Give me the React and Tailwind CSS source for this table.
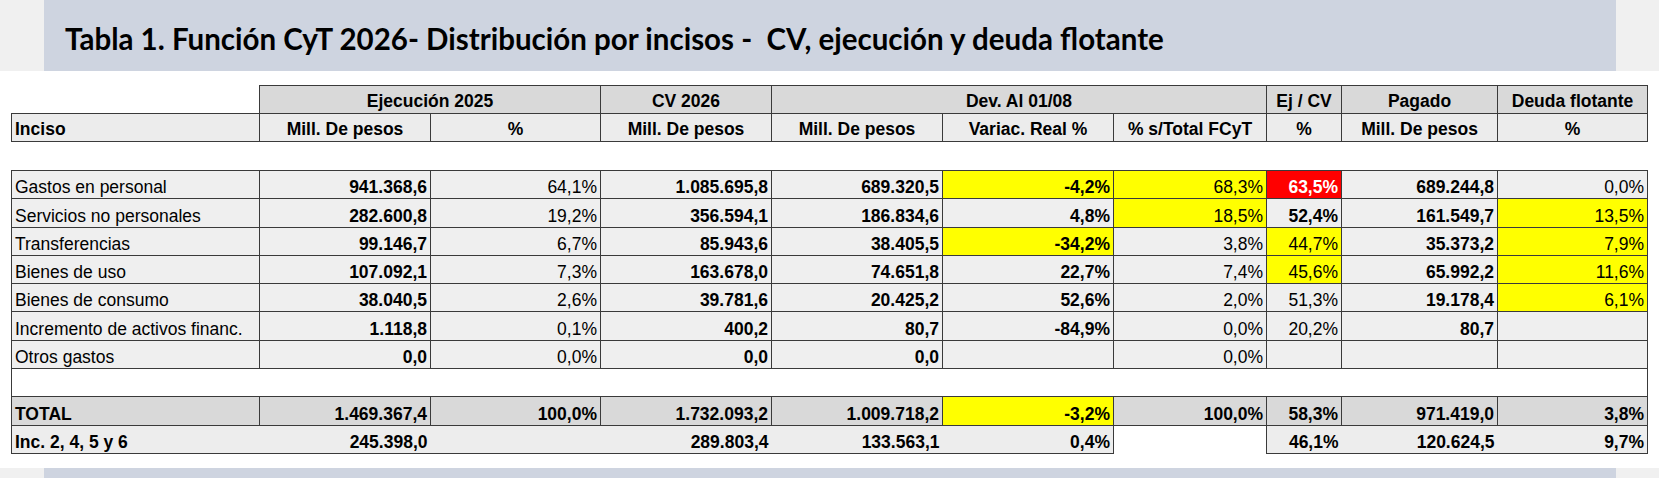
const ROWS = [
  ["Gastos en personal", ["941.368,6", 1], ["64,1%", 0], ["1.085.695,8", 1], ["689.320,5", 1], ["-4,2%", 1, "y"], ["68,3%", 0, "y"], ["63,5%", 1, "r"], ["689.244,8", 1], ["0,0%", 0]],
  ["Servicios no personales", ["282.600,8", 1], ["19,2%", 0], ["356.594,1", 1], ["186.834,6", 1], ["4,8%", 1], ["18,5%", 0, "y"], ["52,4%", 1], ["161.549,7", 1], ["13,5%", 0, "y"]],
  ["Transferencias", ["99.146,7", 1], ["6,7%", 0], ["85.943,6", 1], ["38.405,5", 1], ["-34,2%", 1, "y"], ["3,8%", 0], ["44,7%", 0, "y"], ["35.373,2", 1], ["7,9%", 0, "y"]],
  ["Bienes de uso", ["107.092,1", 1], ["7,3%", 0], ["163.678,0", 1], ["74.651,8", 1], ["22,7%", 1], ["7,4%", 0], ["45,6%", 0, "y"], ["65.992,2", 1], ["11,6%", 0, "y"]],
  ["Bienes de consumo", ["38.040,5", 1], ["2,6%", 0], ["39.781,6", 1], ["20.425,2", 1], ["52,6%", 1], ["2,0%", 0], ["51,3%", 0], ["19.178,4", 1], ["6,1%", 0, "y"]],
  ["Incremento de activos financ.", ["1.118,8", 1], ["0,1%", 0], ["400,2", 1], ["80,7", 1], ["-84,9%", 1], ["0,0%", 0], ["20,2%", 0], ["80,7", 1], ["", 0]],
  ["Otros gastos", ["0,0", 1], ["0,0%", 0], ["0,0", 1], ["0,0", 1], ["", 1], ["0,0%", 0], ["", 0], ["", 1], ["", 0]],
];

const TOTAL = [["1.469.367,4", 1], ["100,0%", 1], ["1.732.093,2", 1], ["1.009.718,2", 1], ["-3,2%", 1, "y"], ["100,0%", 1], ["58,3%", 1], ["971.419,0", 1], ["3,8%", 1]];

const WIDTHS = ["w-[248px]", "w-[171px]", "w-[170px]", "w-[171px]", "w-[171px]", "w-[171px]", "w-[153px]", "w-[75px]", "w-[156px]", "w-[150px]"];

function bgOf(kind, base) {
  if (kind === "y") return "bg-[#ffff00]";
  if (kind === "r") return "bg-[#ff0000] text-white";
  return base;
}

function Cell({ v, b, kind, base = "bg-[#efefef]" }) {
  return (
    <td
      className={`border border-[#3a3a3a] ${bgOf(kind, base)} ${b ? "font-bold" : "font-normal"} text-right pr-[3px] align-bottom pb-[1px] whitespace-nowrap`}
    >
      {v}
    </td>
  );
}

function Label({ children, b, base = "bg-[#efefef]" }) {
  return (
    <td className={`border border-[#3a3a3a] ${base} ${b ? "font-bold" : "font-normal"} text-left pl-[3px] align-bottom pb-[1px] whitespace-nowrap`}>
      {children}
    </td>
  );
}

function H1({ children, span = 1 }) {
  return (
    <th colSpan={span} className="border border-[#3a3a3a] bg-[#d9d9d9] font-bold text-center align-bottom pb-[2px] whitespace-nowrap">
      {children}
    </th>
  );
}

function H2({ children, left }) {
  return (
    <th className={`border border-[#3a3a3a] bg-[#ececec] font-bold ${left ? "text-left pl-[3px]" : "text-center"} align-bottom pb-[2px] whitespace-nowrap`}>
      {children}
    </th>
  );
}

export default function App() {
  return (
    <div className="w-[1659px] h-[478px] bg-white overflow-hidden font-['Liberation_Sans',Arial,sans-serif] text-[17.5px] leading-[20px] text-black">
      <div className="flex h-[71px]">
        <div className="w-[44px] bg-[#f0f0f0]" />
        <div className="flex-1 bg-[#ced4e0] pl-[21px] pt-[24px]">
          <h1 className="font-['Lato',sans-serif] font-bold text-[29.5px] leading-none whitespace-pre text-black">
            Tabla 1. Función CyT 2026- Distribución por incisos -  CV, ejecución y deuda flotante
          </h1>
        </div>
        <div className="w-[43px] bg-[#f0f0f0]" />
      </div>

      <table className="ml-[11px] mt-[14px] w-[1636px] table-fixed border-collapse">
        <colgroup>
          {WIDTHS.map((w, i) => (
            <col key={i} className={w} />
          ))}
        </colgroup>
        <thead>
          <tr className="h-[28px]">
            <th className="bg-white" />
            <H1 span={2}>Ejecución 2025</H1>
            <H1>CV 2026</H1>
            <H1 span={3}>Dev. Al 01/08</H1>
            <H1>Ej / CV</H1>
            <H1>Pagado</H1>
            <H1>Deuda flotante</H1>
          </tr>
          <tr className="h-[28px]">
            <H2 left>Inciso</H2>
            <H2>Mill. De pesos</H2>
            <H2>%</H2>
            <H2>Mill. De pesos</H2>
            <H2>Mill. De pesos</H2>
            <H2>Variac. Real %</H2>
            <H2>% s/Total FCyT</H2>
            <H2>%</H2>
            <H2>Mill. De pesos</H2>
            <H2>%</H2>
          </tr>
        </thead>
        <tbody>
          <tr className="h-[29px]">
            <td colSpan={10} className="bg-white" />
          </tr>
          {ROWS.map((r) => (
            <tr key={r[0]} className="h-[28.3px]">
              <Label>{r[0]}</Label>
              {r.slice(1).map((c, i) => (
                <Cell key={i} v={c[0]} b={c[1]} kind={c[2]} />
              ))}
            </tr>
          ))}
          <tr className="h-[28.3px]">
            <td colSpan={10} className="bg-white border-l border-r border-[#3a3a3a]" />
          </tr>
          <tr className="h-[28.3px]">
            <Label b base="bg-[#d9d9d9]">TOTAL</Label>
            {TOTAL.map((c, i) => (
              <Cell key={i} v={c[0]} b={c[1]} kind={c[2]} base="bg-[#d9d9d9]" />
            ))}
          </tr>
          <tr className="h-[28.3px] font-bold">
            <td className="bg-[#ededed] border-l border-b border-[#3a3a3a] text-left pl-[3px] align-bottom pb-[1px] whitespace-nowrap">Inc. 2, 4, 5 y 6</td>
            <td className="bg-[#ededed] border-b border-[#3a3a3a] text-right pr-[3px] align-bottom pb-[1px]">245.398,0</td>
            <td className="bg-[#ededed] border-b border-[#3a3a3a]" />
            <td className="bg-[#ededed] border-b border-[#3a3a3a] text-right pr-[3px] align-bottom pb-[1px]">289.803,4</td>
            <td className="bg-[#ededed] border-b border-[#3a3a3a] text-right pr-[3px] align-bottom pb-[1px]">133.563,1</td>
            <td className="bg-[#ededed] border-b border-r border-[#3a3a3a] text-right pr-[3px] align-bottom pb-[1px]">0,4%</td>
            <td className="bg-white" />
            <td className="bg-[#ededed] border-l border-b border-[#3a3a3a] text-right pr-[3px] align-bottom pb-[1px]">46,1%</td>
            <td className="bg-[#ededed] border-b border-[#3a3a3a] text-right pr-[3px] align-bottom pb-[1px]">120.624,5</td>
            <td className="bg-[#ededed] border-b border-r border-[#3a3a3a] text-right pr-[3px] align-bottom pb-[1px]">9,7%</td>
          </tr>
        </tbody>
      </table>

      <div className="flex h-[11px] mt-[14px]">
        <div className="w-[44px] bg-[#f0f0f0]" />
        <div className="w-[1572px] bg-[#ced4e0]" />
        <div className="flex-1 bg-[#f0f0f0]" />
      </div>
    </div>
  );
}
